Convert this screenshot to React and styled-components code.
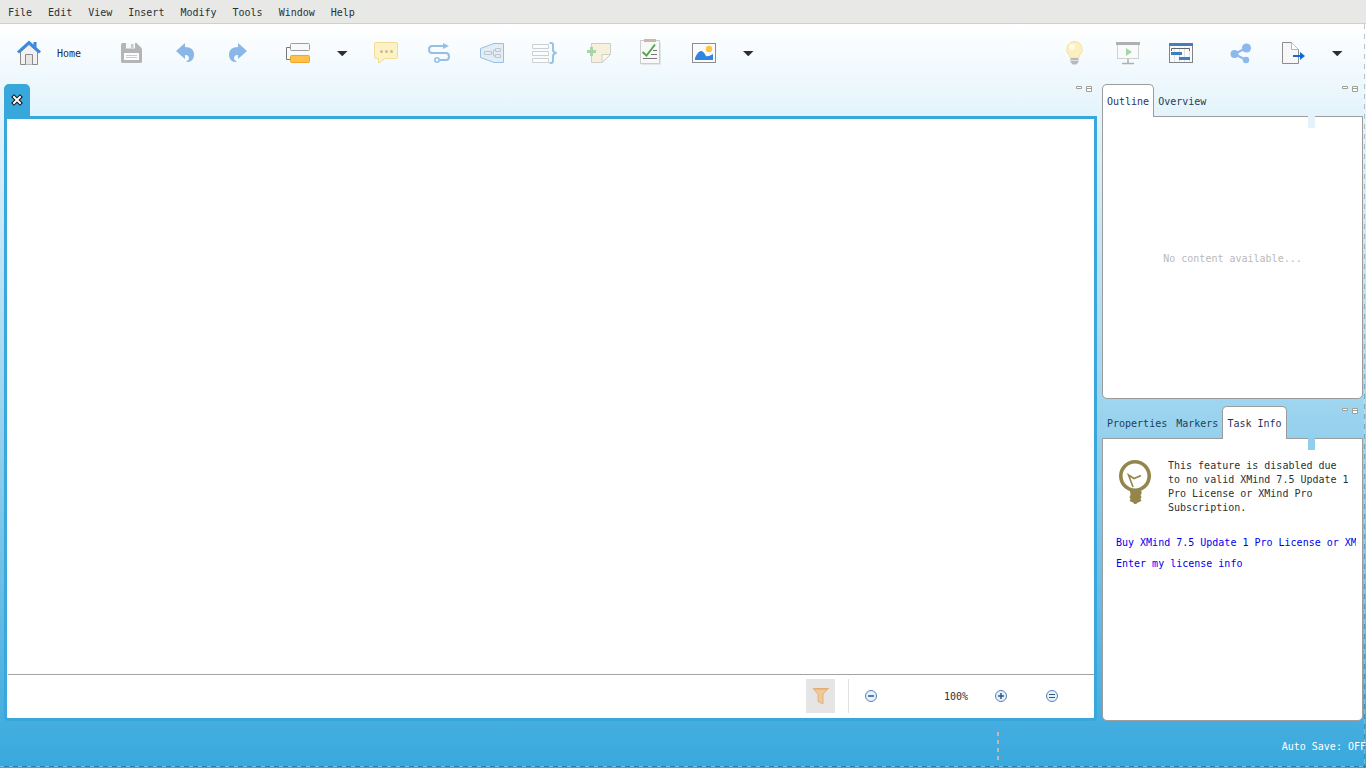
import React from "react";
import styled, { createGlobalStyle, css } from "styled-components";

const GlobalStyle = createGlobalStyle`
  * {
    box-sizing: border-box;
  }
  body {
    margin: 0;
    font-family: "DejaVu Sans Mono", "Liberation Mono", monospace;
    font-size: 10px;
    line-height: 14px;
    color: #2b3138;
  }
  button {
    font: inherit;
    color: inherit;
    background: none;
    border: 0;
    padding: 0;
    cursor: pointer;
  }
  svg {
    display: block;
    flex: none;
    overflow: visible;
  }
`;

const Window = styled.div`
  display: flex;
  flex-direction: column;
  min-height: 100vh;
  position: relative;
  overflow: hidden;
  background: linear-gradient(#ffffff 24px, #e2f3fb 120px, #9fd5ef 400px, #38a8dd);
`;

const dash = css`
  content: "";
  position: absolute;
  pointer-events: none;
`;

const Frame = styled.div`
  &::before {
    ${dash}
    top: 24px;
    bottom: 0;
    right: 1px;
    width: 1px;
    background: repeating-linear-gradient(
      rgba(40, 70, 90, 0.3) 0 5px,
      rgba(255, 255, 255, 0.25) 5px 10px
    );
  }
  &::after {
    ${dash}
    left: 0;
    right: 0;
    bottom: 1px;
    height: 1px;
    background: repeating-linear-gradient(
      to right,
      rgba(255, 255, 255, 0.3) 0 4px,
      rgba(0, 70, 110, 0.4) 4px 9px
    );
  }
`;

const MenuBar = styled.nav`
  display: flex;
  gap: 16px;
  height: 24px;
  padding: 2px 8px 0;
  align-items: center;
  background: #e8e8e6;
  border-bottom: 1px solid #cfcfcd;
`;

const ToolBar = styled.header`
  display: flex;
  align-items: center;
  height: 60px;
  padding: 0 11px 1px 0;
`;

const HomeButton = styled.button`
  display: flex;
  align-items: center;
  gap: 13px;
  width: 106px;
  height: 40px;
  padding-left: 17px;
  flex: none;
  color: #1d2b3f;
`;

const Tool = styled.button`
  display: flex;
  align-items: center;
  justify-content: center;
  width: ${props => (props.$narrow ? 35 : 53)}px;
  height: 39px;
  flex: none;
  margin-left: ${props => (props.$gap ? 7 : 0)}px;
`;

const Spacer = styled.div`
  flex: 1;
`;

const Main = styled.main`
  flex: 1;
  display: flex;
  gap: 5px;
  padding: 0 3px 0 4px;
`;

const Editor = styled.section`
  flex: 1;
  min-width: 0;
  display: flex;
  flex-direction: column;
`;

const TabStrip = styled.div`
  display: flex;
  height: 32px;
`;

const EditorTab = styled.div`
  display: flex;
  align-items: center;
  justify-content: center;
  width: 26px;
  background: #37a7dc;
  border-radius: 5px 5px 0 0;
`;

const WindowButtons = styled.div`
  display: flex;
  align-items: flex-start;
  gap: 4px;
  margin-left: auto;
  padding: 2px 5px 0 0;
`;

const EditorBody = styled.div`
  flex: 1;
  display: flex;
  flex-direction: column;
  background: #fff;
  border: 3px solid #37a7dc;
  border-radius: 0 0 4px 4px;
`;

const Canvas = styled.div`
  flex: 1;
`;

const ZoomBar = styled.div`
  display: flex;
  justify-content: flex-end;
  margin-left: 1px;
  padding: 4px 29px 5px 0;
  border-top: 1px solid #a3a3a3;
`;

const FilterButton = styled.button`
  display: flex;
  align-items: center;
  justify-content: center;
  width: 29px;
  height: 34px;
  background: #e5e5e5;
`;

const Separator = styled.span`
  width: 1px;
  margin: 0 9px 0 13px;
  background: #e2e2e2;
`;

const ZoomButton = styled.button`
  display: flex;
  align-items: center;
  justify-content: center;
  width: 26px;
  height: 34px;
`;

const ZoomValue = styled.output`
  width: 84px;
  margin-right: 20px;
  padding-top: 2px;
  line-height: 32px;
  text-align: right;
`;

const ZoomPair = styled.div`
  display: flex;
  gap: 25px;
`;

const Side = styled.aside`
  width: 261px;
  flex: none;
  display: flex;
  flex-direction: column;
  gap: 7px;
`;

const Pane = styled.section`
  flex: 1 1 0;
  display: flex;
  flex-direction: column;
  position: relative;
`;

const Tab = styled.button`
  height: ${props => (props.$active ? 33 : 32)}px;
  margin-right: -1px;
  padding: 2px 4px 0;
  border: 1px solid ${props => (props.$active ? "#9c9c9c" : "transparent")};
  border-bottom: 0;
  border-radius: 5px 5px 0 0;
  background: ${props => (props.$active ? "#fff" : "none")};
  color: ${props => (props.$active ? "#1f3463" : "#22405a")};
  position: relative;
  z-index: 1;
`;

const PaneBody = styled.div`
  flex: 1;
  display: flex;
  flex-direction: column;
  overflow: hidden;
  background: #fff;
  border: 1px solid #9c9c9c;
  border-radius: 0 0 5px 5px;
`;

// gap cut into the top edge of a pane below its buttons
const Notch = styled.span`
  position: absolute;
  top: 32px;
  right: 48px;
  width: 7px;
  height: 12px;
  background: ${props => props.color};
`;

const Empty = styled.p`
  margin: auto;
  padding-top: 2px;
  color: #b9b9b9;
`;

const Notice = styled.div`
  display: flex;
  gap: 17px;
  padding: 20px 12px 0 16px;
`;

const NoticeText = styled.p`
  flex: 1;
  margin: 0;
`;

const Links = styled.div`
  display: flex;
  flex-direction: column;
  gap: 7px;
  padding: 21px 6px 0 13px;
`;

const License = styled.a`
  overflow: hidden;
  white-space: nowrap;
  color: #0000f0;
  text-decoration: none;
`;

const StatusBar = styled.footer`
  display: flex;
  align-items: center;
  justify-content: flex-end;
  height: 47px;
  padding-top: 5px;
  color: #fff;
  white-space: nowrap;
`;

const Grip = styled.span`
  width: 2px;
  height: 30px;
  margin-right: 283px;
  background: repeating-linear-gradient(
    #c3b8ab 0 4px,
    transparent 4px 8px
  );
`;

const Icon = ({ size = 27, height, children }) => (
  <svg
    width={size}
    height={height || size}
    viewBox={`0 0 ${size} ${height || size}`}
    fill="none"
    aria-hidden="true"
  >
    {children}
  </svg>
);

const HomeIcon = () => (
  <Icon>
    <path d="M3.5 12 12 4.5 20.5 12V24.5H3.5Z" fill="#f1f1f1" stroke="#8b8b8b" />
    <path d="M8.5 24.5V14.5H15.5V24.5" fill="#e6e6e6" stroke="#8b8b8b" />
    <path d="M16.5 2H19.5V8L16.5 5Z" fill="#3a86dd" />
    <path d="M1 12.5 12 2.5 23 12.5" stroke="#3a8ae4" strokeWidth="3" />
  </Icon>
);

const SaveIcon = () => (
  <Icon>
    <path
      d="M3.5 3H17.500L23 8.500V21.5Q23 23 21.5 23H3.5Q2 23 2 21.5V4.5Q2 3 3.5 3Z"
      fill="#b4b5b7"
    />
    <path d="M7 3H16V8.500H7Z" fill="#f6f8f9" />
    <path d="M12 4H14.500V8H12Z" fill="#c9cacc" />
    <path d="M5 13H20V20H5Z" fill="#fafcfd" />
    <path d="M7 15.5H18M7 17.5H18" stroke="#cbccce" />
  </Icon>
);

const arrowPath =
  "M4 11 13 3V7C19 7 22 10 22 14.5C22 19 19.5 22 15.5 22L14 21.5C17 20.5 17.5 18 16.5 16.5C15.8 15.3 14.5 15 13 15V19Z";

const UndoIcon = () => (
  <Icon>
    <path d={arrowPath} fill="#8ab6e8" />
  </Icon>
);

const RedoIcon = () => (
  <Icon>
    <g transform="matrix(-1 0 0 1 26 0)">
      <path d={arrowPath} fill="#8ab6e8" />
    </g>
  </Icon>
);

const TopicIcon = () => (
  <Icon>
    <path d="M5 7.5H1.5V19.5H5" stroke="#777" />
    <rect x="5.5" y="3.5" width="19" height="7" rx="1" fill="#f9f9f9" stroke="#9d9d9d" />
    <rect x="5.5" y="15.5" width="19" height="7" rx="1" fill="#ffc14a" stroke="#f0a52a" />
  </Icon>
);

const CaretIcon = () => (
  <Icon size={11} height={5}>
    <path d="M0 0H10.500L5.500 5H5Z" fill="#2b2f33" />
  </Icon>
);

const CommentIcon = () => (
  <Icon>
    <path
      d="M3 2.5H23Q24.5 2.5 24.5 4V17Q24.5 18.5 23 18.5H12L5.5 23.2V18.5H3Q1.5 18.5 1.5 17V4Q1.5 2.5 3 2.5Z"
      fill="#fbf2c6"
      stroke="#f3dc97"
    />
    <circle cx="8.500" cy="11.500" r="1.500" fill="#d6b88c" />
    <circle cx="13.500" cy="11.500" r="1.500" fill="#d6b88c" />
    <circle cx="18.500" cy="11.500" r="1.500" fill="#d6b88c" />
  </Icon>
);

const RelationshipIcon = () => (
  <Icon>
    <path
      d="M18 6H6Q3 6 3 9.5T6 13H20Q23 13 23 16.5T20 20H13.5"
      stroke="#97bfe4"
      strokeWidth="2"
    />
    <path d="M17 3 23 6 17 9Z" fill="#97bfe4" />
    <circle cx="11" cy="20" r="2.2" stroke="#97bfe4" strokeWidth="1.6" />
  </Icon>
);

const BoundaryIcon = () => (
  <Icon>
    <path d="M1.5 8.5 15 3.5H24.5V22.5H15L1.5 17.5Z" fill="#e3edf6" stroke="#98bfe3" />
    <path
      d="M5.5 11.5H12.5V14.5H5.5ZM16.5 8.5H21.5V11.5H16.5ZM16.5 14.5H21.5V17.5H16.5ZM12.5 13H14.5M16.5 10H14.5V16H16.5"
      stroke="#bec7cf"
    />
  </Icon>
);

const SummaryIcon = () => (
  <Icon>
    <path
      d="M.5 4.5H16.5V8.5H.5ZM.5 11.5H16.5V15.5H.5ZM.5 18.5H16.5V22.5H.5Z"
      fill="#fbfcfc"
      stroke="#cdd0d2"
    />
    <path
      d="M17.5 3H19Q21 3 21 5V10Q21 12.5 24.5 13Q21 13.5 21 16V21Q21 23 19 23H17.5"
      stroke="#9bc1e4"
      strokeWidth="2"
    />
  </Icon>
);

const NoteIcon = () => (
  <Icon>
    <path d="M6.5 3.5H25.5V14L17 22.5H6.5Z" fill="#f6f1dc" stroke="#cfcfc9" />
    <path d="M17 22.5V14.500H25.500Z" fill="#faf8ec" stroke="#cfcfc9" />
    <path d="M5 7H8V10H11V13H8V16H5V13H2V10H5Z" fill="#a8d6a6" />
  </Icon>
);

const TaskIcon = () => (
  <Icon>
    <rect x="2.5" y=".5" width="19" height="23" fill="#f8f8f8" stroke="#cdcdcd" />
    <path d="M3 24.5H22.5V3" stroke="#e1e6e8" />
    <rect x="6" y="-1" width="12" height="3" fill="#cbb9a5" />
    <path d="M15 10.5H19M13 14.5H19M5 18.5H19" stroke="#777" />
    <path d="M4.5 12 8.5 15.5 17 4.5" stroke="#58a550" strokeWidth="2" />
  </Icon>
);

const PictureIcon = () => (
  <Icon>
    <rect x="1.5" y="3.5" width="23" height="19" fill="#fafafa" stroke="#8d8d8d" />
    <circle cx="18" cy="9" r="3.2" fill="#ffc440" />
    <path d="M4 20V18Q7 11 10 11Q12.5 11 15 16Q17 17 22 14V20Z" fill="#3185e0" />
  </Icon>
);

const IdeaIcon = () => (
  <Icon>
    <path
      d="M13.5 1.5A8 8 0 0 1 18.5 15.5L17.5 18H9.5L8.5 15.5A8 8 0 0 1 13.5 1.5Z"
      fill="#fdf0c0"
      stroke="#f5dfa0"
    />
    <circle cx="11" cy="7" r="3" fill="#fffbe8" />
    <path d="M9.5 18H17.5V22L15.5 24.5H11.5L9.5 22Z" fill="#b7b9bb" />
    <path d="M9.5 20.5H17.5" stroke="#dcdedf" />
  </Icon>
);

const PresentIcon = () => (
  <Icon>
    <rect x="3.5" y="4.5" width="21" height="14" fill="#f9fbfb" stroke="#cfd1d2" />
    <rect x="2" y="2" width="24" height="3" fill="#b0b0b0" />
    <path d="M12 8 18 12 12 16Z" fill="#a7d5a8" />
    <path d="M14 19V23M8 23.5H20" stroke="#b0b0b0" strokeWidth="1.6" />
  </Icon>
);

const GanttIcon = () => (
  <Icon>
    <rect x="2.5" y="3.5" width="23" height="19" fill="#fbfbfb" stroke="#7f8387" />
    <path d="M7.5 7V22M12.5 7V22M17.5 7V22M22.5 7V22" stroke="#dfe3e8" />
    <rect x="2" y="3" width="24" height="3" fill="#4a7db6" />
    <path d="M4.5 11V8.5H22.5V11" stroke="#666" />
    <path d="M4 12H15V15H4ZM12 17H23V20H12Z" fill="#3f7dc1" />
  </Icon>
);

const ShareIcon = () => (
  <Icon>
    <path d="M19 8 7.5 14 19 20" stroke="#8cb8ec" strokeWidth="2" />
    <circle cx="7.5" cy="14" r="4" fill="#8cb8ec" />
    <circle cx="19.5" cy="8" r="4.6" fill="#8cb8ec" />
    <circle cx="19" cy="20" r="3.2" fill="#8cb8ec" />
  </Icon>
);

const ExportIcon = () => (
  <Icon>
    <path d="M2.5 2.5H11.5L18.5 9.5V23.5H2.5Z" fill="#f7f7f7" stroke="#8d8d8d" />
    <path d="M11.5 2.5V9.5H18.5" fill="#fff" stroke="#b5b5b5" />
    <path d="M13 15H20V12L25 16L20 20V17H13Z" fill="#1467d8" />
  </Icon>
);

const CloseIcon = () => (
  <Icon size={10}>
    <path d="M2 2 8 8M8 2 2 8" stroke="#111" strokeWidth="4" strokeLinecap="square" />
    <path d="M2 2 8 8M8 2 2 8" stroke="#fff" strokeWidth="2" strokeLinecap="square" />
  </Icon>
);

const MinimizeIcon = () => (
  <Icon size={6} height={3}>
    <path d="M.5 .5H5.5V2.5H.5Z" fill="#fff" stroke="#a29e94" />
  </Icon>
);

const MaximizeIcon = () => (
  <Icon size={6} height={6}>
    <path d="M.5 .5H5.5V5.5H.5ZM.5 2.5H5.5" fill="#fff" stroke="#a29e94" />
  </Icon>
);

const FilterIcon = () => (
  <Icon size={17}>
    <path d="M1 .5H16.5L11 6V16L6 13.5V6Z" fill="#f0c89a" stroke="#e2b27c" />
    <path d="M3 1H15" stroke="#e0a868" />
  </Icon>
);

const zoomMarks = {
  out: "M4 7H10",
  in: "M4 7H10M7 4V10",
  fit: "M4 5.5H10M4 8.5H10"
};

const ZoomIcon = ({ kind }) => (
  <Icon size={14}>
    <circle cx="7" cy="7" r="5.5" fill="#e4f2fa" stroke="#5a7fb3" />
    <path d={zoomMarks[kind]} stroke="#2b568f" strokeWidth={kind === "fit" ? 1 : 1.5} />
  </Icon>
);

const BulbIcon = () => (
  <Icon size={32} height={46}>
    <circle cx="16" cy="17" r="14.2" stroke="#92864c" strokeWidth="3.6" />
    <path d="M14 28 9.5 16 15 19.5 22 16.5" stroke="#92864c" strokeWidth="1.6" />
    <path
      d="M11 32H22.5V35L21.5 36L22.5 38L21.5 40L22.5 42L19 43.5L17 45H15.5L14 43.5L10.5 42L11.5 40L10.5 38L11.5 36Z"
      fill="#92864c"
    />
  </Icon>
);

const menus = ["File", "Edit", "View", "Insert", "Modify", "Tools", "Window", "Help"];

const leftTools = [
  { id: "save", icon: SaveIcon },
  { id: "undo", icon: UndoIcon },
  { id: "redo", icon: RedoIcon },
  { id: "topic", icon: TopicIcon, gap: true },
  { id: "topic-menu", icon: CaretIcon, narrow: true },
  { id: "comment", icon: CommentIcon },
  { id: "relationship", icon: RelationshipIcon },
  { id: "boundary", icon: BoundaryIcon },
  { id: "summary", icon: SummaryIcon },
  { id: "note", icon: NoteIcon },
  { id: "task", icon: TaskIcon },
  { id: "picture", icon: PictureIcon },
  { id: "picture-menu", icon: CaretIcon, narrow: true }
];

const rightTools = [
  { id: "idea", icon: IdeaIcon },
  { id: "present", icon: PresentIcon },
  { id: "gantt", icon: GanttIcon },
  { id: "share", icon: ShareIcon, gap: true },
  { id: "export", icon: ExportIcon },
  { id: "export-menu", icon: CaretIcon, narrow: true }
];

const Tools = ({ items }) =>
  items.map(({ id, icon: ToolIcon, gap, narrow }) => (
    <Tool key={id} aria-label={id} $gap={gap} $narrow={narrow}>
      <ToolIcon />
    </Tool>
  ));

const MinMax = () => (
  <WindowButtons>
    <button aria-label="minimize">
      <MinimizeIcon />
    </button>
    <button aria-label="maximize">
      <MaximizeIcon />
    </button>
  </WindowButtons>
);

const SidePane = ({ tabs, active, notch, children }) => (
  <Pane>
    <TabStrip role="tablist">
      {tabs.map(tab => (
        <Tab key={tab} role="tab" aria-selected={tab === active} $active={tab === active}>
          {tab}
        </Tab>
      ))}
      <MinMax />
    </TabStrip>
    <PaneBody>{children}</PaneBody>
    <Notch color={notch} />
  </Pane>
);

const App = () => (
  <Window>
    <GlobalStyle />
    <MenuBar>
      {menus.map(menu => (
        <button key={menu}>{menu}</button>
      ))}
    </MenuBar>
    <ToolBar>
      <HomeButton>
        <HomeIcon />
        Home
      </HomeButton>
      <Tools items={leftTools} />
      <Spacer />
      <Tools items={rightTools} />
    </ToolBar>
    <Main>
      <Editor>
        <TabStrip>
          <EditorTab>
            <button aria-label="close">
              <CloseIcon />
            </button>
          </EditorTab>
          <MinMax />
        </TabStrip>
        <EditorBody>
          <Canvas />
          <ZoomBar>
            <FilterButton aria-label="filter">
              <FilterIcon />
            </FilterButton>
            <Separator />
            <ZoomButton aria-label="zoom out">
              <ZoomIcon kind="out" />
            </ZoomButton>
            <ZoomValue>100%</ZoomValue>
            <ZoomPair>
              <ZoomButton aria-label="zoom in">
                <ZoomIcon kind="in" />
              </ZoomButton>
              <ZoomButton aria-label="actual size">
                <ZoomIcon kind="fit" />
              </ZoomButton>
            </ZoomPair>
          </ZoomBar>
        </EditorBody>
      </Editor>
      <Side>
        <SidePane tabs={["Outline", "Overview"]} active="Outline" notch="#e2f3fb">
          <Empty>No content available...</Empty>
        </SidePane>
        <SidePane
          tabs={["Properties", "Markers", "Task Info"]}
          active="Task Info"
          notch="#90ceec"
        >
          <Notice>
            <BulbIcon />
            <NoticeText>
              This feature is disabled due to no valid XMind 7.5 Update 1 Pro
              License or XMind Pro Subscription.
            </NoticeText>
          </Notice>
          <Links>
            <License href="#buy">Buy XMind 7.5 Update 1 Pro License or XM</License>
            <License href="#license">Enter my license info</License>
          </Links>
        </SidePane>
      </Side>
    </Main>
    <StatusBar>
      <Grip />
      <span>Auto Save: OFF</span>
    </StatusBar>
    <Frame />
  </Window>
);

export default App;
